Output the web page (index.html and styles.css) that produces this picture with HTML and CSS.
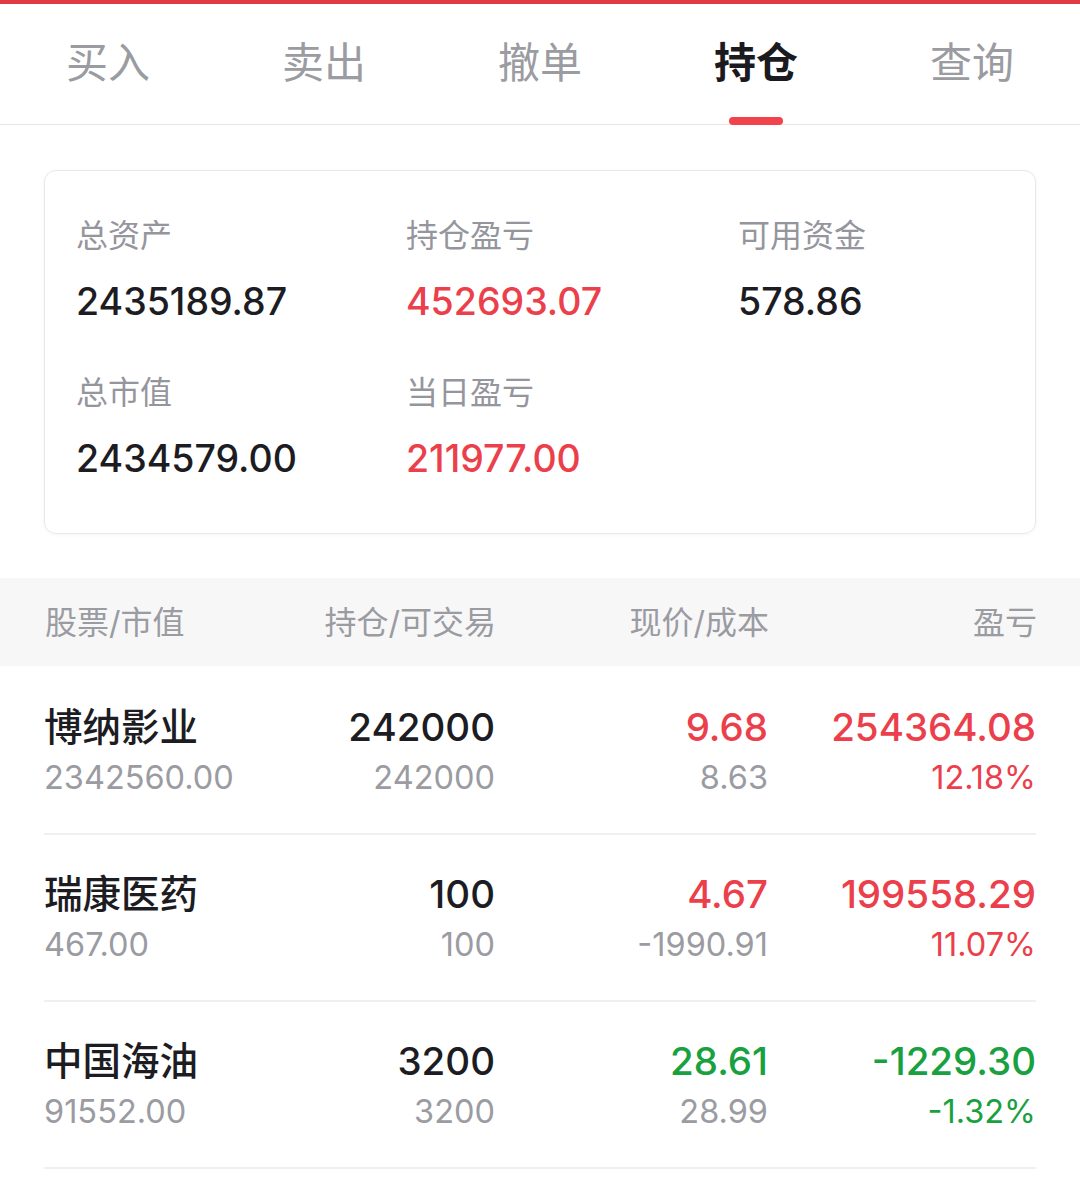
FILE: index.html
```html
<!DOCTYPE html>
<html lang="zh-CN">
<head>
  <meta charset="UTF-8">
  <meta name="viewport" content="width=device-width, initial-scale=1">
  <title>持仓</title>
  <link rel="stylesheet" href="styles.css">
</head>
<body>

  <div class="topbar"></div>

  <!-- Trade tabs -->
  <div class="tabs">
    <div class="tab">买入</div>
    <div class="tab">卖出</div>
    <div class="tab">撤单</div>
    <div class="tab active">持仓</div>
    <div class="tab">查询</div>
  </div>

  <!-- Account summary -->
  <div class="card">
    <div class="stat">
      <div class="stat-label">总资产</div>
      <div class="stat-value">2435189.87</div>
    </div>
    <div class="stat">
      <div class="stat-label">持仓盈亏</div>
      <div class="stat-value up">452693.07</div>
    </div>
    <div class="stat">
      <div class="stat-label">可用资金</div>
      <div class="stat-value">578.86</div>
    </div>
    <div class="stat">
      <div class="stat-label">总市值</div>
      <div class="stat-value">2434579.00</div>
    </div>
    <div class="stat">
      <div class="stat-label">当日盈亏</div>
      <div class="stat-value up">211977.00</div>
    </div>
  </div>

  <!-- Positions -->
  <div class="table-head">
    <div>股票/市值</div>
    <div class="right">持仓/可交易</div>
    <div class="right">现价/成本</div>
    <div class="right">盈亏</div>
  </div>

  <div class="positions">
    <div class="position">
      <div>
        <div class="main name">博纳影业</div>
        <div class="sub">2342560.00</div>
      </div>
      <div class="right">
        <div class="main">242000</div>
        <div class="sub">242000</div>
      </div>
      <div class="right">
        <div class="main up">9.68</div>
        <div class="sub">8.63</div>
      </div>
      <div class="right">
        <div class="main up">254364.08</div>
        <div class="sub up">12.18%</div>
      </div>
    </div>

    <div class="position">
      <div>
        <div class="main name">瑞康医药</div>
        <div class="sub">467.00</div>
      </div>
      <div class="right">
        <div class="main">100</div>
        <div class="sub">100</div>
      </div>
      <div class="right">
        <div class="main up">4.67</div>
        <div class="sub">-1990.91</div>
      </div>
      <div class="right">
        <div class="main up">199558.29</div>
        <div class="sub up">11.07%</div>
      </div>
    </div>

    <div class="position">
      <div>
        <div class="main name">中国海油</div>
        <div class="sub">91552.00</div>
      </div>
      <div class="right">
        <div class="main">3200</div>
        <div class="sub">3200</div>
      </div>
      <div class="right">
        <div class="main down">28.61</div>
        <div class="sub">28.99</div>
      </div>
      <div class="right">
        <div class="main down">-1229.30</div>
        <div class="sub down">-1.32%</div>
      </div>
    </div>
  </div>

</body>
</html>
```

FILE: styles.css
```css
body {
  margin: 0;
  background-color: #fff;
  font-family: Inter, "Noto Sans CJK SC", sans-serif;
  color: #1c1c22;
}
.topbar {
  height: 4px;
  background-color: #e23a42;
}
.tabs {
  display: grid;
  grid-template-columns: repeat(5, 1fr);
  height: 120px;
  border-bottom: 1px solid #e6e6e8;
}
.tab {
  position: relative;
  text-align: center;
  line-height: 118px;
  font-size: 42px;
  color: #9b9ba2;
}
.tab.active {
  color: #1a1a20;
  font-weight: 700;
}
.tab.active::after {
  content: "";
  position: absolute;
  left: 50%;
  bottom: -1px;
  width: 54px;
  height: 8px;
  margin-left: -27px;
  border-radius: 4px;
  background-color: #f2434d;
}
.card {
  display: grid;
  grid-template-columns: 330px 332px 1fr;
  row-gap: 46px;
  margin: 45px 44px 0;
  padding: 45px 0 49px 31px;
  border: 1px solid #e8e8ea;
  border-radius: 12px;
  box-shadow: 0 1px 4px rgba(0, 0, 0, 0.04);
}
.stat-label {
  font-size: 32px;
  line-height: 40px;
  color: #95959d;
}
.stat-value {
  margin-top: 21px;
  font-size: 37.5px;
  line-height: 50px;
  font-weight: 500;
}
.up {
  color: #eb404b;
}
.down {
  color: #19a03f;
}
.table-head,
.position {
  display: grid;
  grid-template-columns: 251px 200px 273px 268px;
}
.table-head {
  margin-top: 44px;
  height: 83px;
  padding: 0 44px 5px 45px;
  align-items: center;
  background-color: #f7f7f8;
  font-size: 32px;
  color: #9b9ba2;
}
.right {
  text-align: right;
}
.positions {
  padding-top: 2px;
}
.position {
  margin: 0 44px;
  padding: 33px 0 30px;
  border-bottom: 2px solid #f0f0f2;
}
.main {
  font-size: 38.5px;
  line-height: 52px;
  font-weight: 500;
}
.sub {
  font-size: 32.5px;
  line-height: 50px;
  color: #9b9ba2;
}
.sub.up {
  color: #eb404b;
}
.sub.down {
  color: #19a03f;
}
```
